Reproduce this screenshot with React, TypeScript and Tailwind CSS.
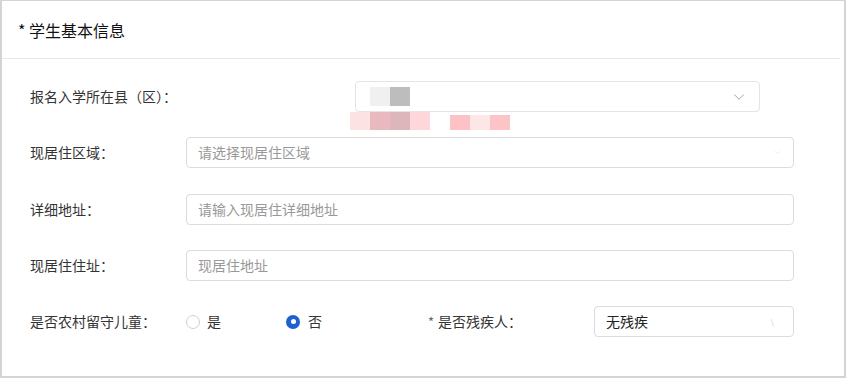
import { ChevronDown } from 'lucide-react';

const font = { fontFamily: '"Noto Sans CJK SC", "Noto Sans", sans-serif' };

function Label({ children, star }: { children: React.ReactNode; star?: boolean }) {
  return (
    <div className="text-[14px] text-[#333]">
      {star && <span className="text-[#666] mr-1 text-[13px]">*</span>}
      {children}
    </div>
  );
}

function Field({ placeholder, value, chevron }: { placeholder?: string; value?: string; chevron?: 'faint' | 'none' }) {
  return (
    <div className="h-[31px] border border-[#dcdcdc] rounded-[4px] flex items-center px-[11px] text-[14px] bg-white">
      <span className={value ? 'text-[#333]' : 'text-[#999]'}>{value ?? placeholder}</span>
      {chevron === 'faint' && <ChevronDown className="ml-auto w-[9px] h-[9px] text-[#e0e0e0]" strokeWidth={1.5} />}
    </div>
  );
}

export default function App() {
  return (
    <div style={font} className="w-[846px] h-[378px] bg-white border-2 border-[#d4d4d4] border-t-[1px] flex flex-col">
      <div className="h-[58px] flex items-center pl-[16px] text-[16px] text-[#111] border-b border-[#e8e8e8] mr-[4px]">
        * 学生基本信息
      </div>

      <div className="flex flex-col pl-[28px] pr-[50px] pt-[22px]">
        <div className="flex items-center h-[31px]">
          <div className="w-[325px]"><Label>报名入学所在县（区）：</Label></div>
          <div className="relative w-[405px] h-[31px] border border-[#e4e4e4] rounded-[4px] flex items-center px-[14px]">
            <div className="flex h-[19px]">
              <div className="w-[20px] bg-[#f0f0f0]" />
              <div className="w-[20px] bg-[#bdbdbd]" />
            </div>
            <ChevronDown className="ml-auto mr-[-3px] w-[18px] h-[18px] text-[#9a9a9a]" strokeWidth={1.2} />
            <div className="absolute left-[-6px] top-[30px] flex h-[18px]">
              <div className="w-[20px] bg-[#fde2e4]" />
              <div className="w-[20px] bg-[#e9b9c0]" />
              <div className="w-[20px] bg-[#ddb6bc]" />
              <div className="w-[20px] bg-[#fdd7da]" />
            </div>
            <div className="absolute left-[94px] top-[33px] flex h-[15px]">
              <div className="w-[20px] bg-[#fdc2c6]" />
              <div className="w-[20px] bg-[#fde6e6]" />
              <div className="w-[20px] bg-[#fdc4c8]" />
            </div>
          </div>
        </div>

        <div className="flex items-center h-[31px] mt-[25px]">
          <div className="w-[156px]"><Label>现居住区域：</Label></div>
          <div className="flex-1"><Field placeholder="请选择现居住区域" chevron="faint" /></div>
        </div>

        <div className="flex items-center h-[31px] mt-[26px]">
          <div className="w-[156px]"><Label>详细地址：</Label></div>
          <div className="flex-1"><Field placeholder="请输入现居住详细地址" /></div>
        </div>

        <div className="flex items-center h-[31px] mt-[25px]">
          <div className="w-[156px]"><Label>现居住住址：</Label></div>
          <div className="flex-1"><Field placeholder="现居住地址" /></div>
        </div>

        <div className="flex items-center h-[31px] mt-[25px]">
          <div className="w-[156px]"><Label>是否农村留守儿童：</Label></div>
          <div className="flex items-center w-[242px] text-[14px] text-[#333]">
            <div className="flex items-center w-[100px]">
              <span className="w-[14px] h-[14px] rounded-full border border-[#cfcfcf] bg-white" />
              <span className="ml-[7px]">是</span>
            </div>
            <div className="flex items-center">
              <span className="w-[14px] h-[14px] rounded-full bg-[#1f5fd1] flex items-center justify-center">
                <span className="w-[5px] h-[5px] rounded-full bg-white" />
              </span>
              <span className="ml-[8px]">否</span>
            </div>
          </div>
          <div className="w-[166px]"><Label star>是否残疾人：</Label></div>
          <div className="flex-1">
            <div className="h-[31px] border border-[#dcdcdc] rounded-[4px] flex items-center px-[11px] text-[14px] bg-white">
              <span className="text-[#222]">无残疾</span>
              <span className="ml-auto mr-[8px] text-[8px] text-[#ccc]">\</span>
            </div>
          </div>
        </div>
      </div>
    </div>
  );
}
